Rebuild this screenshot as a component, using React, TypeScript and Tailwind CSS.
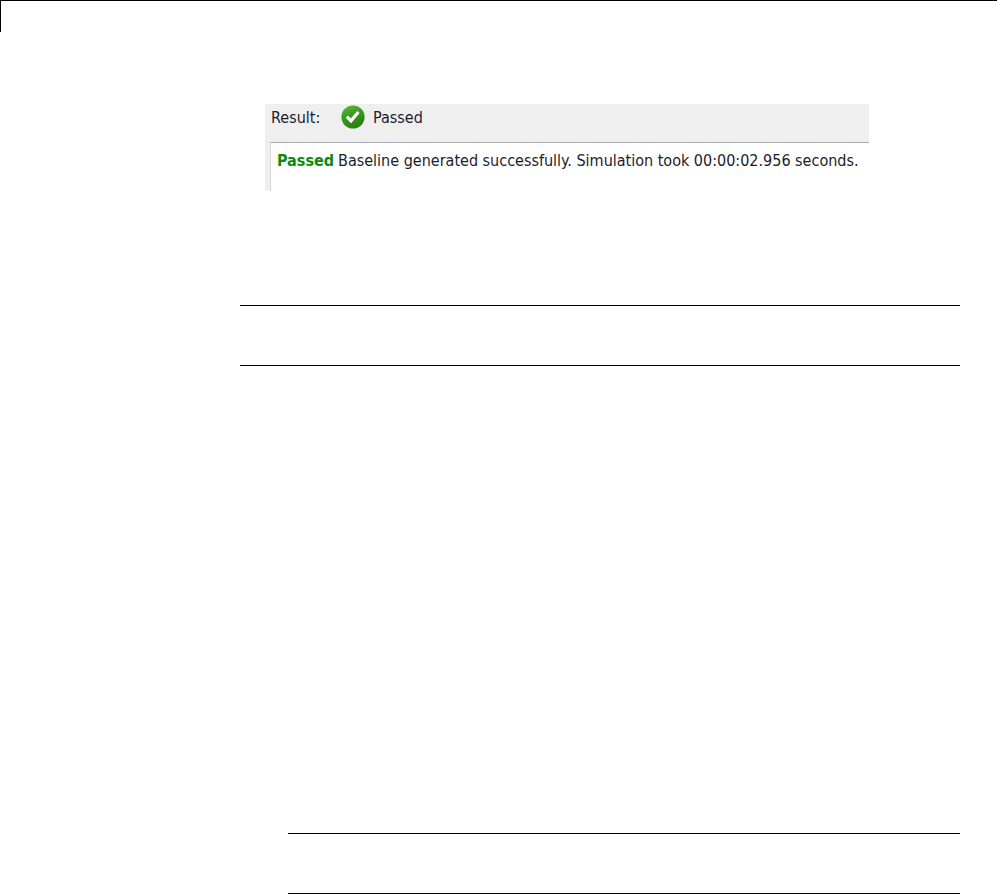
function PassedIcon() {
  return (
    <svg viewBox="0 0 24 24" className="h-6 w-6 shrink-0" aria-hidden="true">
      <defs>
        <linearGradient id="passed-fill" x1="0" y1="0" x2="0.4" y2="1">
          <stop offset="0" stopColor="#5fb84a" />
          <stop offset="0.5" stopColor="#3a9a20" />
          <stop offset="1" stopColor="#2b8012" />
        </linearGradient>
      </defs>
      <circle cx="12" cy="12" r="11.6" fill="url(#passed-fill)" />
      <path d="M5.8 11.6 L10 15.8 L17.4 7" fill="none" stroke="#fff" strokeWidth="3.2" />
    </svg>
  );
}

function ResultPanel() {
  return (
    <section className="mr-[91px] ml-[25px] bg-[#efefef] pl-[5px] font-['DejaVu_Sans_Condensed','DejaVu_Sans',sans-serif] text-base leading-5 text-[#1c1c2c]">
      <div className="flex h-[38px] items-start pt-px pl-px">
        <span className="w-[70px] pt-[3px]">Result:</span>
        <PassedIcon />
        <span className="pt-[3px] pl-2">Passed</span>
      </div>
      <div className="h-[49px] border-t border-l border-t-[#a9a9b2] border-l-[#d4d4da] bg-white pt-2 pl-1.5 whitespace-nowrap">
        <b className="mr-1 font-bold text-[#0b8a0b]">Passed</b>
        <span>Baseline generated successfully. Simulation took 00:00:02.956 seconds.</span>
      </div>
    </section>
  );
}

function NoteRule({ className }: { className: string }) {
  return <div className={`h-[61px] border-y border-black ${className}`} />;
}

export default function App() {
  return (
    <div className="bg-white">
      <header className="h-8 border-t border-l border-black" />
      <main className="mr-[37px] ml-[240px] pt-[72px]">
        <ResultPanel />
        <NoteRule className="mt-[114px]" />
        <NoteRule className="mt-[467px] ml-12" />
      </main>
    </div>
  );
}
